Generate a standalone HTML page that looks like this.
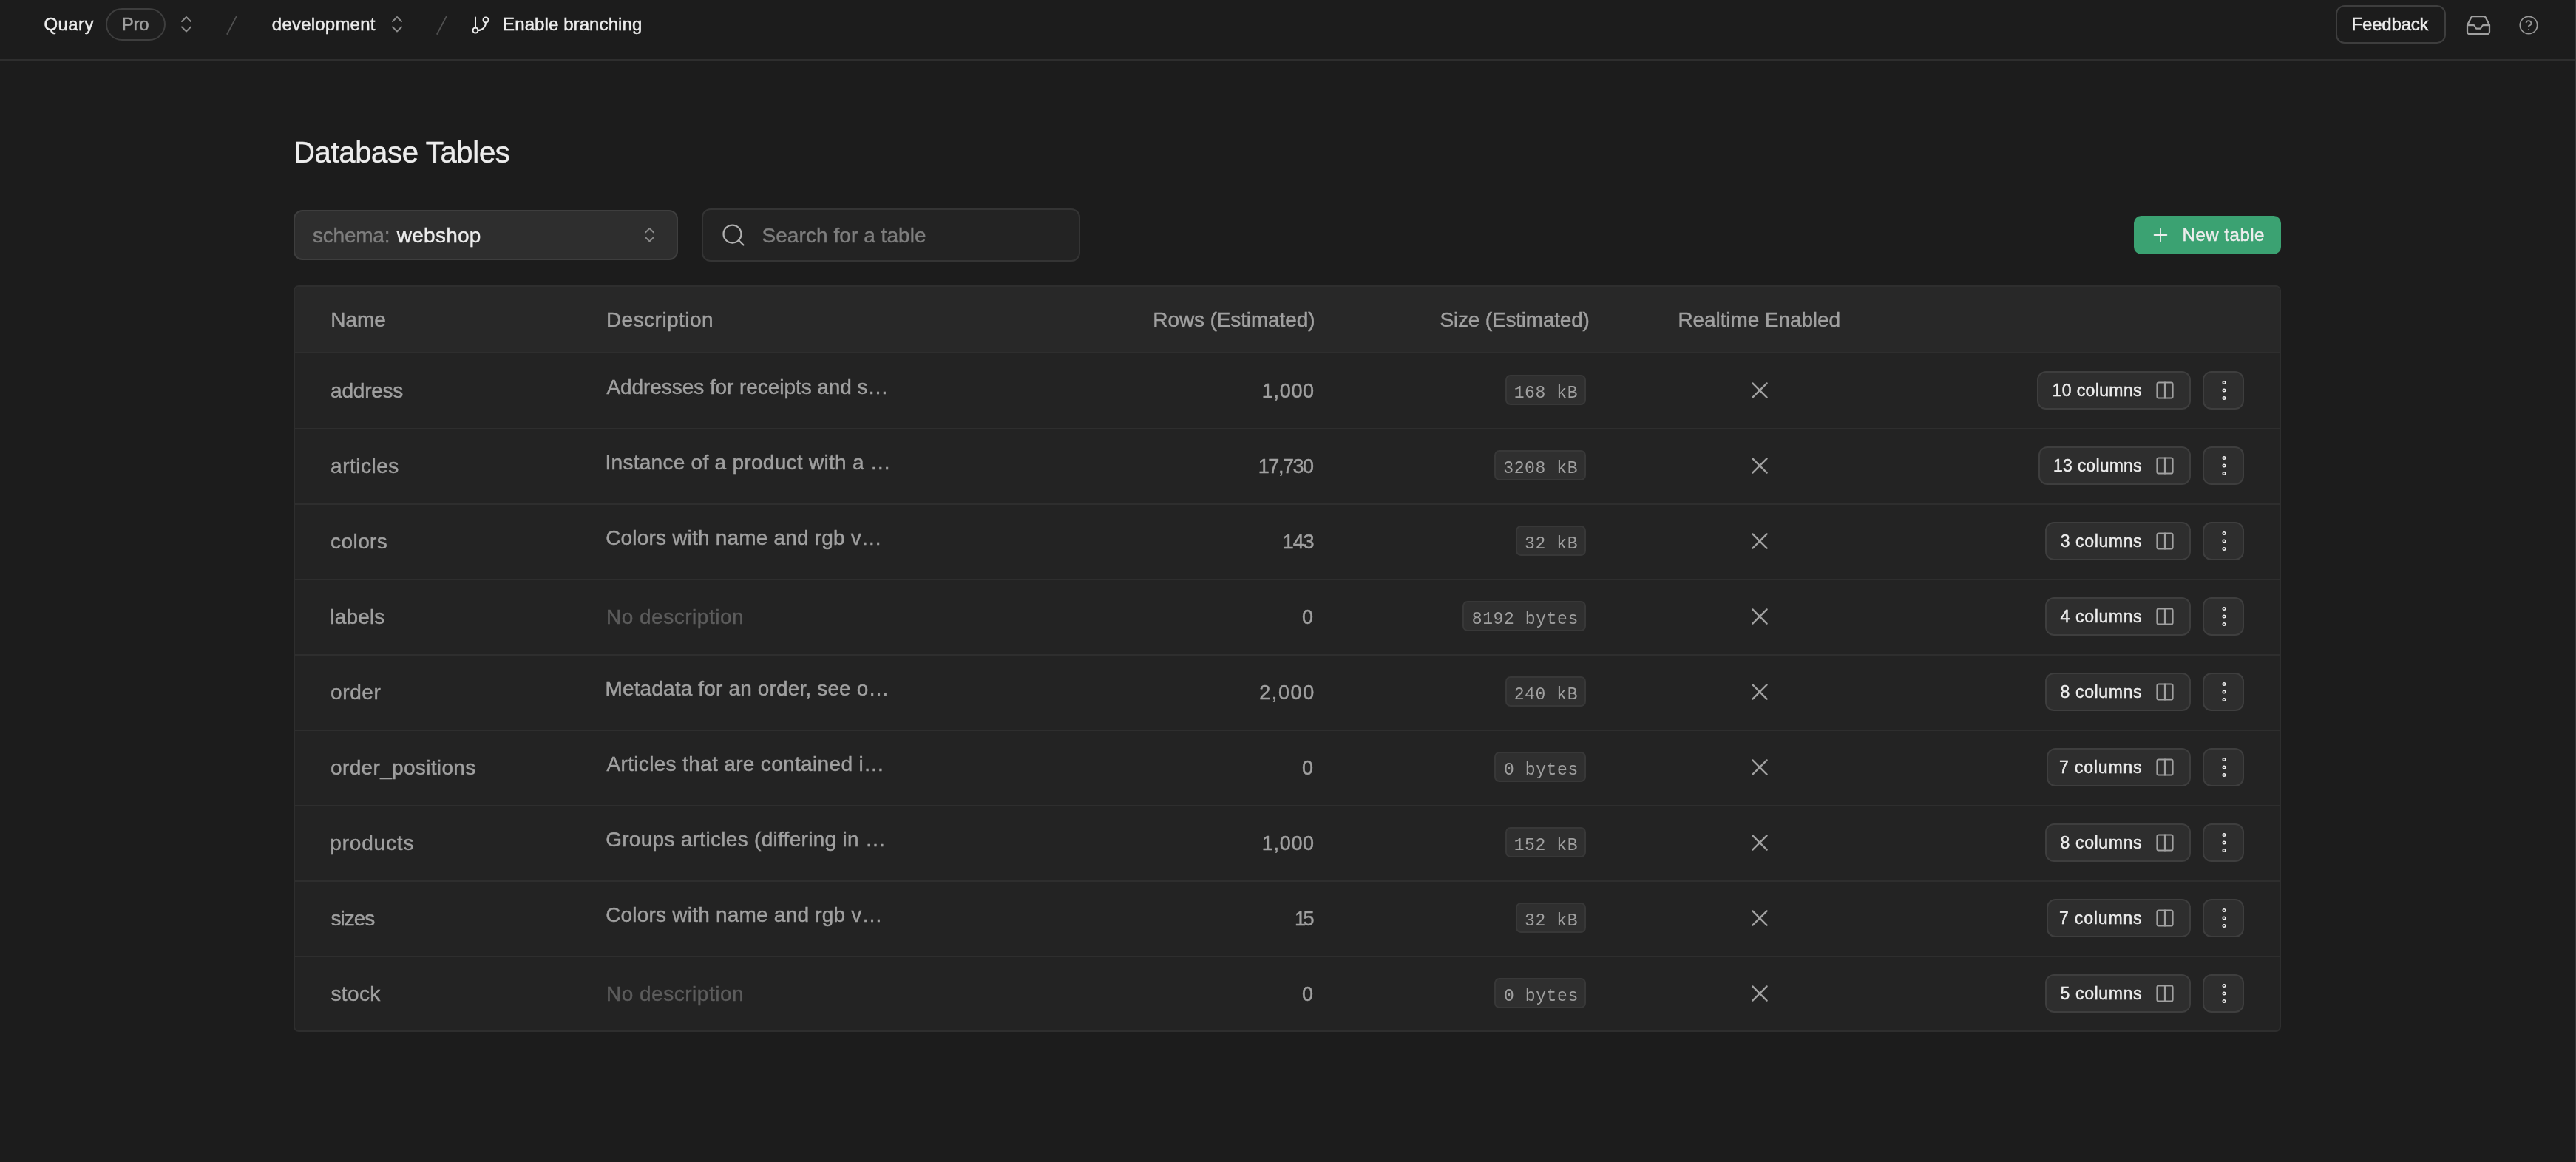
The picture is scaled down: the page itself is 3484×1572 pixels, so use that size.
<!DOCTYPE html>
<html><head><meta charset="utf-8"><title>Database Tables</title>
<style>
html,body{margin:0;padding:0;background:#1c1c1c;}
body{width:3484px;height:1572px;position:relative;overflow:hidden;font-family:"Liberation Sans",sans-serif;}
.t{position:absolute;white-space:pre;-webkit-text-stroke:0.45px}
#txt{position:absolute;left:0;top:0;width:3484px;height:1572px;will-change:transform}
.ico{position:absolute;overflow:visible}
.abs{position:absolute;box-sizing:border-box}
#hdrline{left:0;top:80px;width:3484px;height:2px;background:#2e2e2e}
#vline{left:3482px;top:0;width:2px;height:1572px;background:#3a3a3a}
#pro{left:143px;top:11px;width:81px;height:44px;border:2px solid #3e3e3e;border-radius:22px;background:#1e1e1e}
#feedback{left:3159px;top:7px;width:149px;height:52px;border:2px solid #3e3e3e;border-radius:12px;background:#1c1c1c}
#schema{left:397px;top:284px;width:520px;height:68px;border:2px solid #3e3e3e;border-radius:12px;background:#2e2e2e}
#search{left:949px;top:282px;width:512px;height:72px;border:2px solid #343434;border-radius:12px;background:#232323}
#newtable{left:2886px;top:292px;width:199px;height:52px;border-radius:10px;background:#3ba272}
#table{left:397px;top:386px;width:2688px;height:1010px;border:2px solid #2e2e2e;border-radius:7px;background:#232323;overflow:hidden}
#thead{left:0;top:0;width:2688px;height:90px;background:#282828;border-bottom:2px solid #2e2e2e}
.sep{position:absolute;left:399px;width:2684px;height:2px;background:#2e2e2e}
.badge{position:absolute;box-sizing:border-box;height:41px;border:2px solid #383838;border-radius:7px;background:#2f2f2f;color:#a0a0a0;font-family:"Liberation Mono",monospace;font-size:24px;line-height:39px;text-align:center;white-space:pre}
.cbtn{position:absolute;box-sizing:border-box;height:52px;border:2px solid #3e3e3e;border-radius:12px;background:#2e2e2e}
.mbtn{position:absolute;box-sizing:border-box;left:2979px;width:56px;height:52px;border:2px solid #3e3e3e;border-radius:12px;background:#2e2e2e}
#cb0{left:2755.3px;width:207.7px}#cb1{left:2757.0px;width:206.0px}#cb2{left:2765.5px;width:197.5px}#cb3{left:2765.5px;width:197.5px}#cb4{left:2765.5px;width:197.5px}#cb5{left:2767.5px;width:195.5px}#cb6{left:2765.5px;width:197.5px}#cb7{left:2767.5px;width:195.5px}#cb8{left:2765.5px;width:197.5px}
</style></head><body>
<div class="abs" id="hdrline"></div>
<div class="abs" id="vline"></div>
<div class="abs" id="pro"></div>
<div class="abs" id="feedback"></div>
<svg class="ico" style="left:243.0px;top:20.25px" width="18" height="25.5" viewBox="-3 -3 18 25.5" fill="none" stroke="#8a8a8a" stroke-width="2" stroke-linecap="round" stroke-linejoin="round"><polyline points="0,6.0 6.0,0 12,6.0"/><polyline points="0,13.5 6.0,19.5 12,13.5"/></svg>
<svg class="ico" style="left:528.0px;top:20.25px" width="18" height="25.5" viewBox="-3 -3 18 25.5" fill="none" stroke="#8a8a8a" stroke-width="2" stroke-linecap="round" stroke-linejoin="round"><polyline points="0,6.0 6.0,0 12,6.0"/><polyline points="0,13.5 6.0,19.5 12,13.5"/></svg>
<svg class="ico" style="left:300px;top:16px" width="30" height="36" viewBox="300 16 30 36" stroke="#505050" stroke-width="1.8" stroke-linecap="round"><line x1="319.7" y1="22.3" x2="307.2" y2="46"/></svg>
<svg class="ico" style="left:584px;top:16px" width="30" height="36" viewBox="584 16 30 36" stroke="#505050" stroke-width="1.8" stroke-linecap="round"><line x1="603.7" y1="22.3" x2="591.1" y2="46"/></svg>
<svg class="ico" style="left:636px;top:20px" width="28" height="28" viewBox="0 0 24 24" fill="none" stroke="#ededed" stroke-width="1.7" stroke-linecap="round" stroke-linejoin="round"><line x1="6" y1="3" x2="6" y2="15"/><circle cx="18" cy="6" r="3"/><circle cx="6" cy="18" r="3"/><path d="M18 9a9 9 0 0 1-9 9"/></svg>
<svg class="ico" style="left:3334px;top:16px" width="36" height="36" viewBox="0 0 24 24" fill="none" stroke="#a0a0a0" stroke-width="1.5" stroke-linecap="round" stroke-linejoin="round"><polyline points="22 12 16 12 14 15 10 15 8 12 2 12"/><path d="M5.45 5.11L2 12v6a2 2 0 0 0 2 2h16a2 2 0 0 0 2-2v-6l-3.45-6.89A2 2 0 0 0 16.76 4H7.24a2 2 0 0 0-1.79 1.11z"/></svg>
<svg class="ico" style="left:3406px;top:20px" width="28" height="28" viewBox="0 0 24 24" fill="none" stroke="#999999" stroke-width="1.5" stroke-linecap="round" stroke-linejoin="round"><circle cx="12" cy="12" r="10"/><path d="M9.09 9a3 3 0 0 1 5.83 1c0 2-3 3-3 3"/><line x1="12" y1="17" x2="12.01" y2="17"/></svg>
<div class="abs" id="schema"></div>
<svg class="ico" style="left:870.2px;top:306.25px" width="17" height="23.5" viewBox="-3 -3 17 23.5" fill="none" stroke="#8a8a8a" stroke-width="1.8" stroke-linecap="round" stroke-linejoin="round"><polyline points="0,5.5 5.5,0 11,5.5"/><polyline points="0,12.0 5.5,17.5 11,12.0"/></svg>
<div class="abs" id="search"></div>
<svg class="ico" style="left:974px;top:300px" width="36" height="36" viewBox="0 0 24 24" fill="none" stroke="#b0b0b0" stroke-width="1.5" stroke-linecap="round" stroke-linejoin="round"><circle cx="11" cy="11" r="8"/><line x1="21" y1="21" x2="16.65" y2="16.65"/></svg>
<div class="abs" id="newtable"></div>
<svg class="ico" style="left:2908px;top:304px" width="28" height="28" viewBox="0 0 28 28" stroke="#ededed" stroke-width="1.8" stroke-linecap="round"><line x1="14" y1="5.6" x2="14" y2="22.4"/><line x1="5.6" y1="14" x2="22.4" y2="14"/></svg>
<div class="abs" id="table"><div class="abs" id="thead"></div></div>
<div class="badge" style="left:2035.6px;top:507px;width:109.4px"></div><div class="cbtn" style="top:502px" id="cb0"></div><svg class="ico" style="left:2914px;top:514px" width="28" height="28" viewBox="0 0 24 24" fill="none" stroke="#a0a0a0" stroke-width="1.9" stroke-linecap="round" stroke-linejoin="round"><rect x="3" y="3" width="18" height="18" rx="2"/><line x1="12" y1="3" x2="12" y2="21"/></svg><div class="mbtn" style="top:502px"></div><svg class="ico" style="left:2990px;top:510px" width="36" height="36" viewBox="0 0 24 24" fill="none" stroke="#ededed" stroke-width="1.05" stroke-linecap="round" stroke-linejoin="round"><circle cx="12" cy="5" r="1.15"/><circle cx="12" cy="12" r="1.15"/><circle cx="12" cy="19" r="1.15"/></svg><svg class="ico" style="left:2360px;top:508px" width="40" height="40" viewBox="0 0 40 40" fill="none" stroke="#a0a0a0" stroke-width="2.4" stroke-linecap="round"><line x1="10.4" y1="10.4" x2="29.6" y2="29.6"/><line x1="29.6" y1="10.4" x2="10.4" y2="29.6"/></svg><div class="badge" style="left:2021.2px;top:609px;width:123.8px"></div><div class="cbtn" style="top:604px" id="cb1"></div><svg class="ico" style="left:2914px;top:616px" width="28" height="28" viewBox="0 0 24 24" fill="none" stroke="#a0a0a0" stroke-width="1.9" stroke-linecap="round" stroke-linejoin="round"><rect x="3" y="3" width="18" height="18" rx="2"/><line x1="12" y1="3" x2="12" y2="21"/></svg><div class="mbtn" style="top:604px"></div><svg class="ico" style="left:2990px;top:612px" width="36" height="36" viewBox="0 0 24 24" fill="none" stroke="#ededed" stroke-width="1.05" stroke-linecap="round" stroke-linejoin="round"><circle cx="12" cy="5" r="1.15"/><circle cx="12" cy="12" r="1.15"/><circle cx="12" cy="19" r="1.15"/></svg><svg class="ico" style="left:2360px;top:610px" width="40" height="40" viewBox="0 0 40 40" fill="none" stroke="#a0a0a0" stroke-width="2.4" stroke-linecap="round"><line x1="10.4" y1="10.4" x2="29.6" y2="29.6"/><line x1="29.6" y1="10.4" x2="10.4" y2="29.6"/></svg><div class="sep" style="top:579px"></div><div class="badge" style="left:2050.0px;top:711px;width:95.0px"></div><div class="cbtn" style="top:706px" id="cb2"></div><svg class="ico" style="left:2914px;top:718px" width="28" height="28" viewBox="0 0 24 24" fill="none" stroke="#a0a0a0" stroke-width="1.9" stroke-linecap="round" stroke-linejoin="round"><rect x="3" y="3" width="18" height="18" rx="2"/><line x1="12" y1="3" x2="12" y2="21"/></svg><div class="mbtn" style="top:706px"></div><svg class="ico" style="left:2990px;top:714px" width="36" height="36" viewBox="0 0 24 24" fill="none" stroke="#ededed" stroke-width="1.05" stroke-linecap="round" stroke-linejoin="round"><circle cx="12" cy="5" r="1.15"/><circle cx="12" cy="12" r="1.15"/><circle cx="12" cy="19" r="1.15"/></svg><svg class="ico" style="left:2360px;top:712px" width="40" height="40" viewBox="0 0 40 40" fill="none" stroke="#a0a0a0" stroke-width="2.4" stroke-linecap="round"><line x1="10.4" y1="10.4" x2="29.6" y2="29.6"/><line x1="29.6" y1="10.4" x2="10.4" y2="29.6"/></svg><div class="sep" style="top:681px"></div><div class="badge" style="left:1978.0px;top:813px;width:167.0px"></div><div class="cbtn" style="top:808px" id="cb3"></div><svg class="ico" style="left:2914px;top:820px" width="28" height="28" viewBox="0 0 24 24" fill="none" stroke="#a0a0a0" stroke-width="1.9" stroke-linecap="round" stroke-linejoin="round"><rect x="3" y="3" width="18" height="18" rx="2"/><line x1="12" y1="3" x2="12" y2="21"/></svg><div class="mbtn" style="top:808px"></div><svg class="ico" style="left:2990px;top:816px" width="36" height="36" viewBox="0 0 24 24" fill="none" stroke="#ededed" stroke-width="1.05" stroke-linecap="round" stroke-linejoin="round"><circle cx="12" cy="5" r="1.15"/><circle cx="12" cy="12" r="1.15"/><circle cx="12" cy="19" r="1.15"/></svg><svg class="ico" style="left:2360px;top:814px" width="40" height="40" viewBox="0 0 40 40" fill="none" stroke="#a0a0a0" stroke-width="2.4" stroke-linecap="round"><line x1="10.4" y1="10.4" x2="29.6" y2="29.6"/><line x1="29.6" y1="10.4" x2="10.4" y2="29.6"/></svg><div class="sep" style="top:783px"></div><div class="badge" style="left:2035.6px;top:915px;width:109.4px"></div><div class="cbtn" style="top:910px" id="cb4"></div><svg class="ico" style="left:2914px;top:922px" width="28" height="28" viewBox="0 0 24 24" fill="none" stroke="#a0a0a0" stroke-width="1.9" stroke-linecap="round" stroke-linejoin="round"><rect x="3" y="3" width="18" height="18" rx="2"/><line x1="12" y1="3" x2="12" y2="21"/></svg><div class="mbtn" style="top:910px"></div><svg class="ico" style="left:2990px;top:918px" width="36" height="36" viewBox="0 0 24 24" fill="none" stroke="#ededed" stroke-width="1.05" stroke-linecap="round" stroke-linejoin="round"><circle cx="12" cy="5" r="1.15"/><circle cx="12" cy="12" r="1.15"/><circle cx="12" cy="19" r="1.15"/></svg><svg class="ico" style="left:2360px;top:916px" width="40" height="40" viewBox="0 0 40 40" fill="none" stroke="#a0a0a0" stroke-width="2.4" stroke-linecap="round"><line x1="10.4" y1="10.4" x2="29.6" y2="29.6"/><line x1="29.6" y1="10.4" x2="10.4" y2="29.6"/></svg><div class="sep" style="top:885px"></div><div class="badge" style="left:2021.2px;top:1017px;width:123.8px"></div><div class="cbtn" style="top:1012px" id="cb5"></div><svg class="ico" style="left:2914px;top:1024px" width="28" height="28" viewBox="0 0 24 24" fill="none" stroke="#a0a0a0" stroke-width="1.9" stroke-linecap="round" stroke-linejoin="round"><rect x="3" y="3" width="18" height="18" rx="2"/><line x1="12" y1="3" x2="12" y2="21"/></svg><div class="mbtn" style="top:1012px"></div><svg class="ico" style="left:2990px;top:1020px" width="36" height="36" viewBox="0 0 24 24" fill="none" stroke="#ededed" stroke-width="1.05" stroke-linecap="round" stroke-linejoin="round"><circle cx="12" cy="5" r="1.15"/><circle cx="12" cy="12" r="1.15"/><circle cx="12" cy="19" r="1.15"/></svg><svg class="ico" style="left:2360px;top:1018px" width="40" height="40" viewBox="0 0 40 40" fill="none" stroke="#a0a0a0" stroke-width="2.4" stroke-linecap="round"><line x1="10.4" y1="10.4" x2="29.6" y2="29.6"/><line x1="29.6" y1="10.4" x2="10.4" y2="29.6"/></svg><div class="sep" style="top:987px"></div><div class="badge" style="left:2035.6px;top:1119px;width:109.4px"></div><div class="cbtn" style="top:1114px" id="cb6"></div><svg class="ico" style="left:2914px;top:1126px" width="28" height="28" viewBox="0 0 24 24" fill="none" stroke="#a0a0a0" stroke-width="1.9" stroke-linecap="round" stroke-linejoin="round"><rect x="3" y="3" width="18" height="18" rx="2"/><line x1="12" y1="3" x2="12" y2="21"/></svg><div class="mbtn" style="top:1114px"></div><svg class="ico" style="left:2990px;top:1122px" width="36" height="36" viewBox="0 0 24 24" fill="none" stroke="#ededed" stroke-width="1.05" stroke-linecap="round" stroke-linejoin="round"><circle cx="12" cy="5" r="1.15"/><circle cx="12" cy="12" r="1.15"/><circle cx="12" cy="19" r="1.15"/></svg><svg class="ico" style="left:2360px;top:1120px" width="40" height="40" viewBox="0 0 40 40" fill="none" stroke="#a0a0a0" stroke-width="2.4" stroke-linecap="round"><line x1="10.4" y1="10.4" x2="29.6" y2="29.6"/><line x1="29.6" y1="10.4" x2="10.4" y2="29.6"/></svg><div class="sep" style="top:1089px"></div><div class="badge" style="left:2050.0px;top:1221px;width:95.0px"></div><div class="cbtn" style="top:1216px" id="cb7"></div><svg class="ico" style="left:2914px;top:1228px" width="28" height="28" viewBox="0 0 24 24" fill="none" stroke="#a0a0a0" stroke-width="1.9" stroke-linecap="round" stroke-linejoin="round"><rect x="3" y="3" width="18" height="18" rx="2"/><line x1="12" y1="3" x2="12" y2="21"/></svg><div class="mbtn" style="top:1216px"></div><svg class="ico" style="left:2990px;top:1224px" width="36" height="36" viewBox="0 0 24 24" fill="none" stroke="#ededed" stroke-width="1.05" stroke-linecap="round" stroke-linejoin="round"><circle cx="12" cy="5" r="1.15"/><circle cx="12" cy="12" r="1.15"/><circle cx="12" cy="19" r="1.15"/></svg><svg class="ico" style="left:2360px;top:1222px" width="40" height="40" viewBox="0 0 40 40" fill="none" stroke="#a0a0a0" stroke-width="2.4" stroke-linecap="round"><line x1="10.4" y1="10.4" x2="29.6" y2="29.6"/><line x1="29.6" y1="10.4" x2="10.4" y2="29.6"/></svg><div class="sep" style="top:1191px"></div><div class="badge" style="left:2021.2px;top:1323px;width:123.8px"></div><div class="cbtn" style="top:1318px" id="cb8"></div><svg class="ico" style="left:2914px;top:1330px" width="28" height="28" viewBox="0 0 24 24" fill="none" stroke="#a0a0a0" stroke-width="1.9" stroke-linecap="round" stroke-linejoin="round"><rect x="3" y="3" width="18" height="18" rx="2"/><line x1="12" y1="3" x2="12" y2="21"/></svg><div class="mbtn" style="top:1318px"></div><svg class="ico" style="left:2990px;top:1326px" width="36" height="36" viewBox="0 0 24 24" fill="none" stroke="#ededed" stroke-width="1.05" stroke-linecap="round" stroke-linejoin="round"><circle cx="12" cy="5" r="1.15"/><circle cx="12" cy="12" r="1.15"/><circle cx="12" cy="19" r="1.15"/></svg><svg class="ico" style="left:2360px;top:1324px" width="40" height="40" viewBox="0 0 40 40" fill="none" stroke="#a0a0a0" stroke-width="2.4" stroke-linecap="round"><line x1="10.4" y1="10.4" x2="29.6" y2="29.6"/><line x1="29.6" y1="10.4" x2="10.4" y2="29.6"/></svg><div class="sep" style="top:1293px"></div>
<div id="txt"><span class="t" style="left:59.40px;top:21px;font-size:24px;line-height:24px;letter-spacing:0.437px;color:#ededed;font-family:'Liberation Sans',sans-serif;">Quary</span><span class="t" style="left:164.68px;top:21px;font-size:24px;line-height:24px;letter-spacing:-0.265px;color:#a0a0a0;font-family:'Liberation Sans',sans-serif;">Pro</span><span class="t" style="left:367.87px;top:21px;font-size:24px;line-height:24px;letter-spacing:0.207px;color:#ededed;font-family:'Liberation Sans',sans-serif;">development</span><span class="t" style="left:680.10px;top:21px;font-size:24px;line-height:24px;letter-spacing:0.092px;color:#ededed;font-family:'Liberation Sans',sans-serif;">Enable branching</span><span class="t" style="left:3180.62px;top:21px;font-size:24px;line-height:24px;letter-spacing:-0.200px;color:#ededed;font-family:'Liberation Sans',sans-serif;">Feedback</span><span class="t" style="left:396.88px;top:186px;font-size:40px;line-height:40px;letter-spacing:-0.307px;color:#ededed;font-family:'Liberation Sans',sans-serif;">Database Tables</span><span class="t" style="left:423.01px;top:305px;font-size:28px;line-height:28px;letter-spacing:-0.231px;color:#7e7e7e;font-family:'Liberation Sans',sans-serif;">schema:</span><span class="t" style="left:536.82px;top:305px;font-size:28px;line-height:28px;letter-spacing:0.253px;color:#ededed;font-family:'Liberation Sans',sans-serif;">webshop</span><span class="t" style="left:1030.51px;top:305px;font-size:28px;line-height:28px;letter-spacing:0.063px;color:#7e7e7e;font-family:'Liberation Sans',sans-serif;">Search for a table</span><span class="t" style="left:2951.62px;top:306px;font-size:24px;line-height:24px;letter-spacing:0.516px;color:#ededed;font-family:'Liberation Sans',sans-serif;">New table</span><span class="t" style="left:447.29px;top:419px;font-size:28px;line-height:28px;letter-spacing:-0.082px;color:#a0a0a0;font-family:'Liberation Sans',sans-serif;">Name</span><span class="t" style="left:819.91px;top:419px;font-size:28px;line-height:28px;letter-spacing:0.471px;color:#a0a0a0;font-family:'Liberation Sans',sans-serif;">Description</span><span class="t" style="left:1559.36px;top:419px;font-size:28px;line-height:28px;letter-spacing:-0.123px;color:#a0a0a0;font-family:'Liberation Sans',sans-serif;">Rows (Estimated)</span><span class="t" style="left:1947.58px;top:419px;font-size:28px;line-height:28px;letter-spacing:-0.205px;color:#a0a0a0;font-family:'Liberation Sans',sans-serif;">Size (Estimated)</span><span class="t" style="left:2269.47px;top:419px;font-size:28px;line-height:28px;letter-spacing:-0.097px;color:#a0a0a0;font-family:'Liberation Sans',sans-serif;">Realtime Enabled</span><span class="t" style="left:447.12px;top:515px;font-size:28px;line-height:28px;letter-spacing:-0.227px;color:#a0a0a0;font-family:'Liberation Sans',sans-serif;">address</span><span class="t" style="left:820.46px;top:510px;font-size:28px;line-height:28px;letter-spacing:-0.064px;color:#a0a0a0;font-family:'Liberation Sans',sans-serif;">Addresses for receipts and s…</span><span class="t" style="left:1706.81px;top:516px;font-size:27px;line-height:27px;letter-spacing:0.693px;color:#a0a0a0;font-family:'Liberation Sans',sans-serif;">1,000</span><span class="t" style="left:2047.71px;top:521px;font-size:23px;line-height:23px;letter-spacing:0.600px;color:#a0a0a0;font-family:'Liberation Mono',monospace;-webkit-text-stroke:0;">168 kB</span><span class="t" style="left:2775.52px;top:517px;font-size:23px;line-height:23px;letter-spacing:0.384px;color:#ededed;font-family:'Liberation Sans',sans-serif;">10 columns</span><span class="t" style="left:447.12px;top:617px;font-size:28px;line-height:28px;letter-spacing:0.509px;color:#a0a0a0;font-family:'Liberation Sans',sans-serif;">articles</span><span class="t" style="left:818.47px;top:612px;font-size:28px;line-height:28px;letter-spacing:0.281px;color:#a0a0a0;font-family:'Liberation Sans',sans-serif;">Instance of a product with a …</span><span class="t" style="left:1701.81px;top:618px;font-size:27px;line-height:27px;letter-spacing:-1.448px;color:#a0a0a0;font-family:'Liberation Sans',sans-serif;">17,730</span><span class="t" style="left:2033.31px;top:623px;font-size:23px;line-height:23px;letter-spacing:0.600px;color:#a0a0a0;font-family:'Liberation Mono',monospace;-webkit-text-stroke:0;">3208 kB</span><span class="t" style="left:2777.06px;top:619px;font-size:23px;line-height:23px;letter-spacing:0.213px;color:#ededed;font-family:'Liberation Sans',sans-serif;">13 columns</span><span class="t" style="left:447.12px;top:719px;font-size:28px;line-height:28px;letter-spacing:0.412px;color:#a0a0a0;font-family:'Liberation Sans',sans-serif;">colors</span><span class="t" style="left:819.15px;top:714px;font-size:28px;line-height:28px;letter-spacing:0.188px;color:#a0a0a0;font-family:'Liberation Sans',sans-serif;">Colors with name and rgb v…</span><span class="t" style="left:1734.79px;top:720px;font-size:27px;line-height:27px;letter-spacing:-1.133px;color:#a0a0a0;font-family:'Liberation Sans',sans-serif;">143</span><span class="t" style="left:2062.11px;top:725px;font-size:23px;line-height:23px;letter-spacing:0.600px;color:#a0a0a0;font-family:'Liberation Mono',monospace;-webkit-text-stroke:0;">32 kB</span><span class="t" style="left:2786.66px;top:721px;font-size:23px;line-height:23px;letter-spacing:0.639px;color:#ededed;font-family:'Liberation Sans',sans-serif;">3 columns</span><span class="t" style="left:446.25px;top:821px;font-size:28px;line-height:28px;letter-spacing:0.193px;color:#a0a0a0;font-family:'Liberation Sans',sans-serif;">labels</span><span class="t" style="left:819.91px;top:821px;font-size:28px;line-height:28px;letter-spacing:0.517px;color:#5c5c5c;font-family:'Liberation Sans',sans-serif;">No description</span><span class="t" style="left:1761.10px;top:822px;font-size:27px;line-height:27px;letter-spacing:0.000px;color:#a0a0a0;font-family:'Liberation Sans',sans-serif;">0</span><span class="t" style="left:1990.82px;top:827px;font-size:23px;line-height:23px;letter-spacing:0.600px;color:#a0a0a0;font-family:'Liberation Mono',monospace;-webkit-text-stroke:0;">8192 bytes</span><span class="t" style="left:2786.62px;top:823px;font-size:23px;line-height:23px;letter-spacing:0.644px;color:#ededed;font-family:'Liberation Sans',sans-serif;">4 columns</span><span class="t" style="left:447.12px;top:923px;font-size:28px;line-height:28px;letter-spacing:0.577px;color:#a0a0a0;font-family:'Liberation Sans',sans-serif;">order</span><span class="t" style="left:818.47px;top:918px;font-size:28px;line-height:28px;letter-spacing:0.152px;color:#a0a0a0;font-family:'Liberation Sans',sans-serif;">Metadata for an order, see o…</span><span class="t" style="left:1703.25px;top:924px;font-size:27px;line-height:27px;letter-spacing:1.583px;color:#a0a0a0;font-family:'Liberation Sans',sans-serif;">2,000</span><span class="t" style="left:2047.71px;top:929px;font-size:23px;line-height:23px;letter-spacing:0.600px;color:#a0a0a0;font-family:'Liberation Mono',monospace;-webkit-text-stroke:0;">240 kB</span><span class="t" style="left:2786.46px;top:925px;font-size:23px;line-height:23px;letter-spacing:0.664px;color:#ededed;font-family:'Liberation Sans',sans-serif;">8 columns</span><span class="t" style="left:447.12px;top:1025px;font-size:28px;line-height:28px;letter-spacing:0.334px;color:#a0a0a0;font-family:'Liberation Sans',sans-serif;">order_positions</span><span class="t" style="left:820.46px;top:1020px;font-size:28px;line-height:28px;letter-spacing:0.337px;color:#a0a0a0;font-family:'Liberation Sans',sans-serif;">Articles that are contained i…</span><span class="t" style="left:1761.10px;top:1026px;font-size:27px;line-height:27px;letter-spacing:0.000px;color:#a0a0a0;font-family:'Liberation Sans',sans-serif;">0</span><span class="t" style="left:2034.03px;top:1031px;font-size:23px;line-height:23px;letter-spacing:0.600px;color:#a0a0a0;font-family:'Liberation Mono',monospace;-webkit-text-stroke:0;">0 bytes</span><span class="t" style="left:2785.00px;top:1027px;font-size:23px;line-height:23px;letter-spacing:0.846px;color:#ededed;font-family:'Liberation Sans',sans-serif;">7 columns</span><span class="t" style="left:446.25px;top:1127px;font-size:28px;line-height:28px;letter-spacing:0.822px;color:#a0a0a0;font-family:'Liberation Sans',sans-serif;">products</span><span class="t" style="left:819.15px;top:1122px;font-size:28px;line-height:28px;letter-spacing:0.301px;color:#a0a0a0;font-family:'Liberation Sans',sans-serif;">Groups articles (differing in …</span><span class="t" style="left:1706.81px;top:1128px;font-size:27px;line-height:27px;letter-spacing:0.693px;color:#a0a0a0;font-family:'Liberation Sans',sans-serif;">1,000</span><span class="t" style="left:2047.71px;top:1133px;font-size:23px;line-height:23px;letter-spacing:0.600px;color:#a0a0a0;font-family:'Liberation Mono',monospace;-webkit-text-stroke:0;">152 kB</span><span class="t" style="left:2786.46px;top:1129px;font-size:23px;line-height:23px;letter-spacing:0.664px;color:#ededed;font-family:'Liberation Sans',sans-serif;">8 columns</span><span class="t" style="left:447.56px;top:1229px;font-size:28px;line-height:28px;letter-spacing:-1.030px;color:#a0a0a0;font-family:'Liberation Sans',sans-serif;">sizes</span><span class="t" style="left:819.15px;top:1224px;font-size:28px;line-height:28px;letter-spacing:0.214px;color:#a0a0a0;font-family:'Liberation Sans',sans-serif;">Colors with name and rgb v…</span><span class="t" style="left:1751.07px;top:1230px;font-size:27px;line-height:27px;letter-spacing:-3.530px;color:#a0a0a0;font-family:'Liberation Sans',sans-serif;">15</span><span class="t" style="left:2062.11px;top:1235px;font-size:23px;line-height:23px;letter-spacing:0.600px;color:#a0a0a0;font-family:'Liberation Mono',monospace;-webkit-text-stroke:0;">32 kB</span><span class="t" style="left:2785.00px;top:1231px;font-size:23px;line-height:23px;letter-spacing:0.846px;color:#ededed;font-family:'Liberation Sans',sans-serif;">7 columns</span><span class="t" style="left:447.56px;top:1331px;font-size:28px;line-height:28px;letter-spacing:0.327px;color:#a0a0a0;font-family:'Liberation Sans',sans-serif;">stock</span><span class="t" style="left:819.91px;top:1331px;font-size:28px;line-height:28px;letter-spacing:0.517px;color:#5c5c5c;font-family:'Liberation Sans',sans-serif;">No description</span><span class="t" style="left:1761.10px;top:1332px;font-size:27px;line-height:27px;letter-spacing:0.000px;color:#a0a0a0;font-family:'Liberation Sans',sans-serif;">0</span><span class="t" style="left:2034.03px;top:1337px;font-size:23px;line-height:23px;letter-spacing:0.600px;color:#a0a0a0;font-family:'Liberation Mono',monospace;-webkit-text-stroke:0;">0 bytes</span><span class="t" style="left:2786.46px;top:1333px;font-size:23px;line-height:23px;letter-spacing:0.664px;color:#ededed;font-family:'Liberation Sans',sans-serif;">5 columns</span></div>
<script>(function(){var w=window.innerWidth;if(w&&w<3000){document.body.style.zoom=(w/3484);}})();</script>
</body></html>
